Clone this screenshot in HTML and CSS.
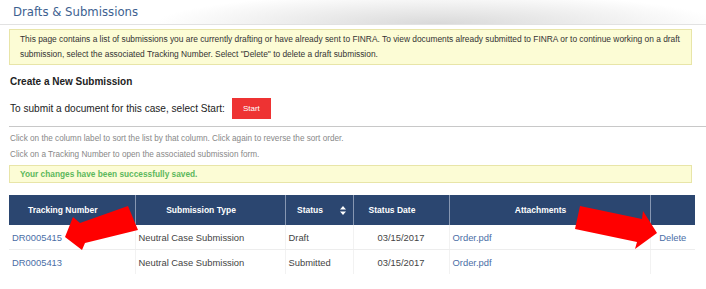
FILE: index.html
```html
<!DOCTYPE html>
<html lang="en">
<head>
    <meta charset="UTF-8">
    <title>Drafts &amp; Submissions</title>
    <link rel="stylesheet" href="styles.css">
</head>
<body>
    <header class="page-header">
        <h1 class="page-title">Drafts &amp; Submissions</h1>
    </header>

    <div class="content">
        <div class="notice">
            This page contains a list of submissions you are currently drafting or have already sent to FINRA. To view documents already submitted to FINRA or to continue working on a draft submission, select the associated Tracking Number. Select "Delete" to delete a draft submission.
        </div>

        <h2 class="section-title">Create a New Submission</h2>
        <div class="start-row">
            <span>To submit a document for this case, select Start:</span>
            <button class="btn-start">Start</button>
        </div>
    </div>

    <hr class="divider">

    <div class="content">
        <p class="hint">Click on the column label to sort the list by that column. Click again to reverse the sort order.</p>
        <p class="hint">Click on a Tracking Number to open the associated submission form.</p>

        <div class="notice notice-success">Your changes have been successfully saved.</div>

        <table class="subs-table">
            <colgroup>
                <col style="width:126px">
                <col style="width:150px">
                <col style="width:68px">
                <col style="width:96px">
                <col style="width:201px">
                <col style="width:45px">
            </colgroup>
            <thead>
                <tr>
                    <th>Tracking Number</th>
                    <th>Submission Type</th>
                    <th class="sortable">Status
                        <svg class="sort-icon" width="6" height="9" viewBox="0 0 6 9"><path d="M3 0L6 3.5H0z M3 9L0 5.5H6z" fill="#fff"/></svg>
                    </th>
                    <th>Status Date</th>
                    <th>Attachments</th>
                    <th></th>
                </tr>
            </thead>
            <tbody>
                <tr>
                    <td><a href="#">DR0005415</a></td>
                    <td>Neutral Case Submission</td>
                    <td>Draft</td>
                    <td class="center">03/15/2017</td>
                    <td><a href="#">Order.pdf</a></td>
                    <td class="center"><a href="#">Delete</a></td>
                </tr>
                <tr>
                    <td><a href="#">DR0005413</a></td>
                    <td>Neutral Case Submission</td>
                    <td>Submitted</td>
                    <td class="center">03/15/2017</td>
                    <td><a href="#">Order.pdf</a></td>
                    <td></td>
                </tr>
            </tbody>
        </table>
    </div>

    <!-- annotation arrows drawn over the table -->
    <svg class="arrows" width="706" height="289" viewBox="0 0 706 289">
        <polygon fill="#ff0000" points="65,237 73,217 80,223 128,206 138,230 85,243 82,250"/>
        <polygon fill="#ff0000" points="580,206 642,219 643,211 657,233 635,249 637,242 575,229"/>
    </svg>
</body>
</html>
```

FILE: styles.css
```css
body {
    margin: 0;
    font-family: "Liberation Sans", Arial, sans-serif;
    color: #333;
    position: relative;
    width: 706px;
    height: 289px;
    overflow: hidden;
    background: #fff;
}

.page-header {
    height: 24px;
    padding-left: 13px;
    border-bottom: 1px solid #e2e2e2;
    background:
        radial-gradient(ellipse 40% 130% at 62% 100%, #d9d9d9, rgba(255, 255, 255, 0) 100%),
        #fff;
}

.page-title {
    margin: 0;
    font-family: "DejaVu Sans Condensed", "DejaVu Sans", sans-serif;
    font-weight: normal;
    font-size: 13px;
    line-height: 24px;
    color: #3d5f90;
}

.content {
    padding: 0 14px 0 9px;
}

.notice {
    margin-top: 4px;
    padding: 2px 10px 2px 10px;
    background-color: #fcfcd5;
    border: 1px solid #e8e5a8;
    font-size: 8.4px;
    line-height: 15px;
    color: #333;
}

.notice-success {
    margin-top: 2px;
    padding: 1px 10px;
    font-size: 8.3px;
    font-weight: bold;
    color: #5cb85c;
    line-height: 14px;
}

.section-title {
    margin: 10px 0 0 1px;
    font-size: 10px;
    line-height: 14px;
    color: #222;
}

.start-row {
    display: flex;
    align-items: center;
    gap: 7px;
    margin: 9px 0 0 1px;
    font-size: 10.1px;
    color: #222;
}

.btn-start {
    width: 39px;
    height: 21px;
    padding: 0;
    border: none;
    background-color: #ee3333;
    color: #fff;
    font-family: "Liberation Sans", Arial, sans-serif;
    font-size: 8px;
    cursor: pointer;
}

.divider {
    margin: 7px 0 0 9px;
    border: none;
    border-top: 1px solid #c8c8c8;
}

.hint {
    margin: 0 0 0 1px;
    font-size: 8.2px;
    line-height: 16px;
    color: #888;
}

.hint:first-child {
    margin-top: 4px;
}

.subs-table {
    margin-top: 12px;
    width: 686px;
    border-collapse: collapse;
    table-layout: fixed;
    font-size: 9.4px;
    color: #444;
}

.subs-table th {
    position: relative;
    height: 30px;
    padding: 0 18px 0 0;
    background-color: #2b4670;
    border-left: 1px solid #8797b2;
    color: #fff;
    font-size: 8.5px;
    font-weight: bold;
    text-align: center;
}

.subs-table th:first-child {
    border-left: none;
}

.sort-icon {
    position: absolute;
    right: 7px;
    top: 11px;
}

.subs-table td {
    height: 24px;
    padding: 0 3px;
    border-left: 1px solid #f2f2f2;
    border-bottom: 1px solid #ededed;
    white-space: nowrap;
}

.subs-table td:first-child {
    border-left: none;
}

.subs-table tbody tr:last-child td {
    border-bottom: none;
}

.subs-table td.center {
    text-align: center;
}

.subs-table a {
    color: #4a6ea6;
    text-decoration: none;
}

.arrows {
    position: absolute;
    top: 0;
    left: 0;
    pointer-events: none;
}
```
